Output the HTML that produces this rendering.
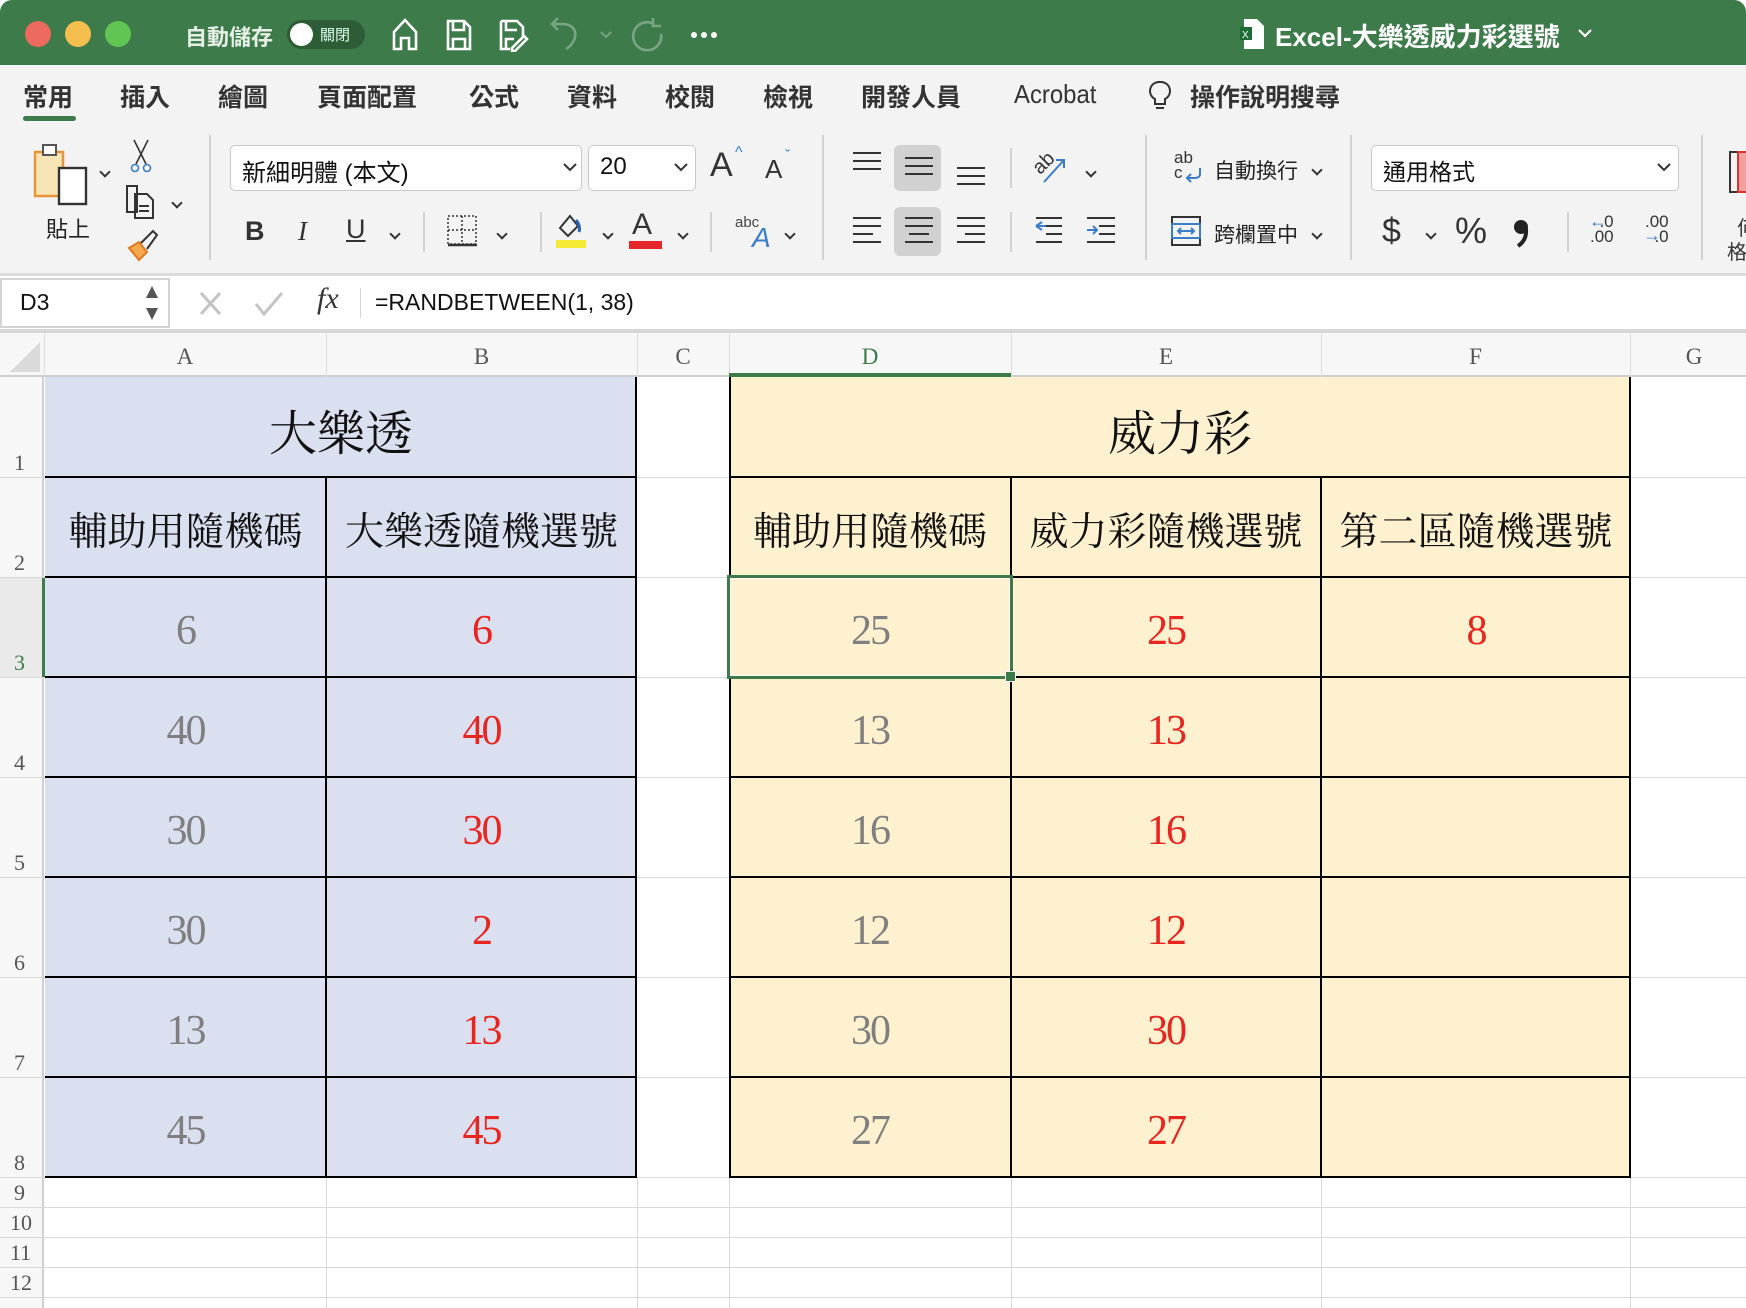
<!DOCTYPE html>
<html><head><meta charset="utf-8"><style>
*{margin:0;padding:0;box-sizing:border-box}
body{width:1746px;height:1308px;overflow:hidden;background:#fff;position:relative;font-family:"Liberation Sans","Noto Sans CJK TC",sans-serif;color:#222}
.a{position:absolute}
.t{position:absolute;white-space:nowrap}
.ser{font-family:"Liberation Serif","Noto Serif CJK SC",serif}
.c{position:absolute;display:flex;align-items:center;justify-content:center;font-family:"Liberation Serif","Noto Serif CJK SC",serif;padding-top:8px}
.g{color:#7f7f7f;font-size:42px;letter-spacing:-2px}
.r{color:#e8251f;font-size:42px;letter-spacing:-2px}
.h{font-size:39px;color:#111}
.sep{position:absolute;width:2px;background:#d2d2d2}
.chev{position:absolute;width:8px;height:8px;border-right:2.5px solid #333;border-bottom:2.5px solid #333;transform:translate(2px,8px) rotate(45deg)}
</style></head><body>
<!-- title bar -->
<div class="a" style="left:0;top:0;width:1746px;height:65px;background:#3d7b4a;border-radius:12px 12px 0 0"></div>
<div class="a" style="left:25px;top:21px;width:26px;height:26px;border-radius:50%;background:#ec6a5e"></div>
<div class="a" style="left:65px;top:21px;width:26px;height:26px;border-radius:50%;background:#f4bf4f"></div>
<div class="a" style="left:105px;top:21px;width:26px;height:26px;border-radius:50%;background:#61c554"></div>
<div class="t" style="left:185px;top:20px;font-size:22px;color:#e6efe6;font-weight:bold">自動儲存</div>
<div class="a" style="left:287px;top:20px;width:78px;height:29px;border-radius:15px;background:#2d5c37"></div>
<div class="a" style="left:290px;top:23px;width:23px;height:23px;border-radius:50%;background:#fff"></div>
<div class="t" style="left:320px;top:24px;font-size:15px;color:#dfe"> 關閉</div>
<svg class="a" style="left:390px;top:16px" width="340" height="36" viewBox="0 0 340 36" fill="none" stroke="#fff" stroke-width="2.6">
<path d="M4 33V16L15 4 26 16V33H19V22H11V33Z"/>
<path d="M58 5H74L80 11V33H58Z M63 5V14H74V5 M63 33V23H75V33"/>
<path d="M111 5H127L133 11V20 M111 5V33H120 M116 5V14H127 M116 33V23H124 M122 32L134 20L137 23L125 35H122Z"/>
<path stroke="#7aa585" d="M176 33C188 26 190 8 172 8H162 M168 2L162 8L168 14"/>
<path stroke="#7aa585" stroke-width="2" d="M211 16L216 21L221 16"/>
<path stroke="#7aa585" d="M264 8A14 14 0 1 0 271 18 M263 2V10H271"/>
</svg>
<div class="a" style="left:691px;top:32px;width:6px;height:6px;border-radius:50%;background:#fff"></div>
<div class="a" style="left:701px;top:32px;width:6px;height:6px;border-radius:50%;background:#fff"></div>
<div class="a" style="left:711px;top:32px;width:6px;height:6px;border-radius:50%;background:#fff"></div>
<svg class="a" style="left:1240px;top:18px" width="26" height="32"><path d="M4 1H17L24 8V31H4Z" fill="#fff"/><rect x="0" y="9" width="12" height="13" fill="#1e6b3a"/><text x="2" y="20" font-size="10" fill="#fff" font-family="Liberation Sans">X</text></svg>
<div class="t" style="left:1275px;top:17px;font-size:26px;color:#fff;font-weight:bold">Excel-大樂透威力彩選號</div>
<svg class="a" style="left:1577px;top:28px" width="16" height="12"><path d="M2 2L8 8L14 2" stroke="#fff" stroke-width="2.2" fill="none"/></svg>
<!-- tabs / ribbon -->
<div class="a" style="left:0;top:65px;width:1746px;height:210px;background:#f3f3f3"></div>
<div class="t" style="left:23px;top:78px;font-size:25px;font-weight:bold;color:#333">常用</div>
<div class="a" style="left:23px;top:116px;width:53px;height:5px;border-radius:3px;background:#3d7b4a"></div>
<div class="t" style="left:120px;top:78px;font-size:25px;color:#333;font-weight:bold">插入</div>
<div class="t" style="left:218px;top:78px;font-size:25px;color:#333;font-weight:bold">繪圖</div>
<div class="t" style="left:317px;top:78px;font-size:25px;color:#333;font-weight:bold">頁面配置</div>
<div class="t" style="left:469px;top:78px;font-size:25px;color:#333;font-weight:bold">公式</div>
<div class="t" style="left:567px;top:78px;font-size:25px;color:#333;font-weight:bold">資料</div>
<div class="t" style="left:665px;top:78px;font-size:25px;color:#333;font-weight:bold">校閱</div>
<div class="t" style="left:763px;top:78px;font-size:25px;color:#333;font-weight:bold">檢視</div>
<div class="t" style="left:861px;top:78px;font-size:25px;color:#333;font-weight:bold">開發人員</div>
<div class="t" style="left:1014px;top:79px;font-size:26px;color:#333;transform:scaleX(0.92);transform-origin:left">Acrobat</div>
<svg class="a" style="left:1148px;top:80px" width="24" height="32" fill="none" stroke="#333" stroke-width="2"><path d="M12 2A9 9 0 0 0 7 19V24H17V19A9 9 0 0 0 12 2Z M8 28H16"/></svg>
<div class="t" style="left:1190px;top:78px;font-size:25px;color:#333;font-weight:bold">操作說明搜尋</div>
<!-- paste -->
<svg class="a" style="left:32px;top:142px" width="60" height="70" fill="none"><rect x="3" y="10" width="28" height="44" fill="#f8e4b4" stroke="#e8953a" stroke-width="2.5"/><rect x="11" y="3" width="13" height="10" fill="#fff" stroke="#555" stroke-width="2"/><rect x="27" y="26" width="27" height="36" fill="#fff" stroke="#333" stroke-width="2.4"/></svg>
<div class="chev" style="left:99px;top:160px"></div>
<div class="t" style="left:46px;top:212px;font-size:22px;color:#222">貼上</div>
<svg class="a" style="left:128px;top:138px" width="30" height="36" fill="none" stroke="#333" stroke-width="1.6"><path d="M6 2L18 26 M20 2L8 26"/><circle cx="7" cy="30" r="3.5" stroke="#3a7dc9"/><circle cx="19" cy="30" r="3.5" stroke="#3a7dc9"/></svg>
<svg class="a" style="left:125px;top:184px" width="30" height="36" fill="none" stroke="#333" stroke-width="2"><path d="M2 2H12V28H2Z M10 10H22L28 16V34H10Z M14 22H24 M14 27H24"/></svg>
<div class="chev" style="left:171px;top:191px"></div>
<svg class="a" style="left:125px;top:228px" width="34" height="34"><path d="M4 20L14 14L22 24L14 32Z" fill="#f6a84c" stroke="#e07a22" stroke-width="2"/><path d="M16 15L28 3L32 7L22 21" fill="none" stroke="#333" stroke-width="2"/></svg>
<div class="sep" style="left:209px;top:135px;height:125px"></div>
<!-- font -->
<div class="a" style="left:230px;top:145px;width:352px;height:46px;background:#fff;border:1.5px solid #c8c8c8;border-radius:5px"></div>
<div class="t" style="left:242px;top:153px;font-size:24px;color:#111">新細明體 (本文)</div>
<svg class="a" style="left:562px;top:162px" width="16" height="12"><path d="M2 2L8 8L14 2" stroke="#333" stroke-width="2" fill="none"/></svg>
<div class="a" style="left:588px;top:145px;width:108px;height:46px;background:#fff;border:1.5px solid #c8c8c8;border-radius:5px"></div>
<div class="t" style="left:600px;top:153px;font-size:24px;color:#111">20</div>
<svg class="a" style="left:673px;top:162px" width="16" height="12"><path d="M2 2L8 8L14 2" stroke="#333" stroke-width="2" fill="none"/></svg>
<div class="t" style="left:710px;top:146px;font-size:34px;color:#333">A</div><div class="t" style="left:735px;top:144px;font-size:16px;color:#3a7dc9">^</div>
<div class="t" style="left:765px;top:154px;font-size:26px;color:#333">A</div><div class="t" style="left:785px;top:148px;font-size:16px;color:#3a7dc9">ˇ</div>
<div class="t" style="left:245px;top:216px;font-size:27px;font-weight:bold;color:#333">B</div>
<div class="t ser" style="left:298px;top:216px;font-size:27px;font-style:italic;color:#333">I</div>
<div class="t" style="left:346px;top:214px;font-size:27px;text-decoration:underline;color:#333">U</div>
<div class="chev" style="left:389px;top:222px"></div>
<div class="sep" style="left:423px;top:212px;height:40px"></div>
<svg class="a" style="left:446px;top:214px" width="34" height="34" fill="none" stroke="#333" stroke-width="1.5" stroke-dasharray="2 2"><rect x="2" y="2" width="28" height="28"/><path d="M16 2V30 M2 16H30"/><path d="M2 31H31" stroke-dasharray="none" stroke-width="2.5"/></svg>
<div class="chev" style="left:496px;top:222px"></div>
<div class="sep" style="left:540px;top:212px;height:40px"></div>
<svg class="a" style="left:554px;top:210px" width="34" height="40"><path d="M6 18L16 6L24 16L14 26Z" fill="none" stroke="#333" stroke-width="2"/><path d="M22 10Q27 16 25 22" stroke="#2a64b8" stroke-width="3" fill="none"/><rect x="2" y="30" width="30" height="8" fill="#f5ea35"/></svg>
<div class="chev" style="left:602px;top:222px"></div>
<div class="t" style="left:632px;top:208px;font-size:30px;color:#333">A</div>
<div class="a" style="left:629px;top:241px;width:33px;height:8px;background:#e5262a"></div>
<div class="chev" style="left:677px;top:222px"></div>
<div class="sep" style="left:710px;top:212px;height:40px"></div>
<div class="t" style="left:735px;top:214px;font-size:15px;color:#444">abc</div>
<div class="t" style="left:752px;top:222px;font-size:28px;font-style:italic;color:#3a7dc9">A</div>
<div class="chev" style="left:784px;top:222px"></div>
<div class="sep" style="left:822px;top:135px;height:125px"></div>
<!-- alignment -->
<div class="a" style="left:894px;top:145px;width:47px;height:46px;background:#d1d1d1;border-radius:6px"></div>
<div class="a" style="left:894px;top:207px;width:47px;height:49px;background:#d1d1d1;border-radius:6px"></div>
<svg class="a" style="left:850px;top:150px" width="260" height="100" fill="none" stroke="#333" stroke-width="2">
<path d="M3 3H31 M3 11H31 M3 19H31"/>
<path d="M55 8H83 M55 16H83 M55 24H83"/>
<path d="M107 18H135 M107 26H135 M107 34H135"/>
<path d="M3 68H31 M3 76H31 M3 84H23 M3 92H31"/>
<path d="M55 68H83 M55 76H83 M59 84H79 M55 92H83"/>
<path d="M107 68H135 M107 76H135 M115 84H135 M107 92H135"/>
<path d="M186 68H212 M196 76H212 M196 84H212 M186 92H212"/>
<path d="M186 76L192 72 M186 76L192 80 M186 76H196" stroke="#3a7dc9"/>
</svg>
<svg class="a" style="left:1085px;top:216px" width="36" height="34" fill="none" stroke="#333" stroke-width="2"><path d="M2 2H30 M14 10H30 M14 18H30 M2 26H30"/><path d="M2 14H12 M8 10L12 14L8 18" stroke="#3a7dc9"/></svg>
<div class="t" style="left:1033px;top:152px;font-size:20px;color:#333;transform:rotate(-45deg)">ab</div>
<svg class="a" style="left:1040px;top:156px" width="30" height="30"><path d="M4 26L24 4 M16 4H24V12" stroke="#3a7dc9" stroke-width="2" fill="none"/></svg>
<div class="chev" style="left:1085px;top:160px"></div>
<div class="sep" style="left:1010px;top:212px;height:40px"></div>
<div class="sep" style="left:1010px;top:148px;height:40px"></div>
<div class="sep" style="left:1145px;top:135px;height:125px"></div>
<div class="t" style="left:1174px;top:150px;font-size:17px;color:#333;line-height:15px">ab<br>c</div>
<svg class="a" style="left:1184px;top:166px" width="20" height="18"><path d="M16 2V8Q16 12 10 12H3 M7 8L3 12L7 16" stroke="#3a7dc9" stroke-width="2" fill="none"/></svg>
<div class="t" style="left:1214px;top:155px;font-size:21px;color:#222">自動換行</div>
<div class="chev" style="left:1311px;top:158px"></div>
<svg class="a" style="left:1170px;top:215px" width="32" height="32" fill="none" stroke="#333" stroke-width="2"><rect x="2" y="2" width="28" height="28"/><rect x="2" y="9" width="28" height="14" stroke="#3a7dc9"/><path d="M8 16H24 M11 13L8 16L11 19 M21 13L24 16L21 19" stroke="#3a7dc9"/></svg>
<div class="t" style="left:1214px;top:219px;font-size:21px;color:#222">跨欄置中</div>
<div class="chev" style="left:1311px;top:222px"></div>
<div class="sep" style="left:1350px;top:135px;height:125px"></div>
<!-- number -->
<div class="a" style="left:1371px;top:145px;width:308px;height:46px;background:#fff;border:1.5px solid #c8c8c8;border-radius:5px"></div>
<div class="t" style="left:1383px;top:153px;font-size:23px;color:#111">通用格式</div>
<svg class="a" style="left:1656px;top:162px" width="16" height="12"><path d="M2 2L8 8L14 2" stroke="#333" stroke-width="2" fill="none"/></svg>
<div class="t" style="left:1382px;top:212px;font-size:34px;color:#333;font-weight:300">$</div>
<div class="chev" style="left:1425px;top:222px"></div>
<div class="t" style="left:1455px;top:210px;font-size:36px;color:#333">%</div>
<svg class="a" style="left:1512px;top:218px" width="20" height="30"><circle cx="9" cy="9" r="7" fill="#222"/><path d="M14 11Q15 22 6 28" stroke="#222" stroke-width="4" fill="none"/></svg>
<div class="sep" style="left:1567px;top:212px;height:40px"></div>
<div class="t" style="left:1590px;top:214px;font-size:17px;color:#333;line-height:15px">&nbsp;&nbsp;.0<br>.00</div>
<div class="t" style="left:1589px;top:211px;font-size:18px;color:#3a7dc9">←</div>
<div class="t" style="left:1645px;top:214px;font-size:17px;color:#333;line-height:15px">.00<br>&nbsp;&nbsp;.0</div>
<div class="t" style="left:1643px;top:225px;font-size:18px;color:#3a7dc9">→</div>
<div class="sep" style="left:1701px;top:135px;height:125px"></div>
<svg class="a" style="left:1728px;top:150px" width="20" height="44" fill="none" stroke="#333" stroke-width="2"><rect x="2" y="2" width="30" height="40"/><rect x="10" y="2" width="10" height="40" fill="#f3a0a0" stroke="#d33"/></svg>
<div class="t" style="left:1737px;top:212px;font-size:20px;color:#333">何</div>
<div class="t" style="left:1727px;top:236px;font-size:20px;color:#333">格</div>
<div class="a" style="left:0;top:273px;width:1746px;height:3px;background:#dcdcdc"></div>
<!-- formula bar -->
<div class="a" style="left:0;top:276px;width:1746px;height:55px;background:#fff"></div>
<div class="a" style="left:0;top:278px;width:170px;height:50px;border:2px solid #d5d5d5;background:#fff"></div>
<div class="t" style="left:20px;top:289px;font-size:23px;color:#111">D3</div>
<svg class="a" style="left:144px;top:284px" width="16" height="38"><path d="M2 14L8 2L14 14Z M2 24L8 36L14 24Z" fill="#555"/></svg>
<svg class="a" style="left:198px;top:290px" width="90" height="28" fill="none" stroke="#c4c4c4" stroke-width="3"><path d="M3 3L22 24 M22 3L3 24"/><path d="M58 14L66 24L84 3"/></svg>
<div class="t ser" style="left:317px;top:282px;font-size:30px;font-style:italic;color:#333">fx</div>
<div class="a" style="left:360px;top:288px;width:1px;height:30px;background:#d5d5d5"></div>
<div class="t" style="left:375px;top:289px;font-size:23px;color:#111">=RANDBETWEEN(1, 38)</div>
<div class="a" style="left:0;top:329px;width:1746px;height:4px;background:#d8d8d8"></div>
<!-- column header -->
<div class="a" style="left:0;top:333px;width:1746px;height:44px;background:#f7f7f7;border-bottom:2px solid #cfcfcf"></div>
<svg class="a" style="left:8px;top:340px" width="34" height="34"><path d="M32 2V32H2Z" fill="#dadada"/></svg>
<div class="a" style="left:44px;top:333px;width:1px;height:44px;background:#ddd"></div>
<div class="a" style="left:326px;top:333px;width:1px;height:44px;background:#ddd"></div>
<div class="a" style="left:637px;top:333px;width:1px;height:44px;background:#ddd"></div>
<div class="a" style="left:729px;top:333px;width:1px;height:44px;background:#ddd"></div>
<div class="a" style="left:1011px;top:333px;width:1px;height:44px;background:#ddd"></div>
<div class="a" style="left:1321px;top:333px;width:1px;height:44px;background:#ddd"></div>
<div class="a" style="left:1630px;top:333px;width:1px;height:44px;background:#ddd"></div>
<div class="a" style="left:729px;top:373px;width:282px;height:4px;background:#3d7b4a"></div>
<div class="c" style="left:44px;top:335px;width:282px;height:44px;font-size:23px;color:#555;padding:0">A</div>
<div class="c" style="left:326px;top:335px;width:311px;height:44px;font-size:23px;color:#555;padding:0">B</div>
<div class="c" style="left:637px;top:335px;width:92px;height:44px;font-size:23px;color:#555;padding:0">C</div>
<div class="c" style="left:729px;top:335px;width:282px;height:44px;font-size:23px;color:#3d7b4a;padding:0">D</div>
<div class="c" style="left:1011px;top:335px;width:310px;height:44px;font-size:23px;color:#555;padding:0">E</div>
<div class="c" style="left:1321px;top:335px;width:309px;height:44px;font-size:23px;color:#555;padding:0">F</div>
<div class="c" style="left:1636px;top:335px;width:116px;height:44px;font-size:23px;color:#555;padding:0">G</div>
<!-- row header -->
<div class="a" style="left:0;top:377px;width:44px;height:931px;background:#f7f7f7;border-right:2px solid #cfcfcf"></div>
<div class="a" style="left:0;top:577px;width:44px;height:100px;background:#eaeaea"></div>
<div class="a" style="left:42px;top:577px;width:3px;height:100px;background:#3d7b4a"></div>
<!-- gridlines -->
<div class="a" style="left:44px;top:477px;width:1702px;height:1px;background:#d8d8d8"></div>
<div class="a" style="left:44px;top:577px;width:1702px;height:1px;background:#d8d8d8"></div>
<div class="a" style="left:44px;top:677px;width:1702px;height:1px;background:#d8d8d8"></div>
<div class="a" style="left:44px;top:777px;width:1702px;height:1px;background:#d8d8d8"></div>
<div class="a" style="left:44px;top:877px;width:1702px;height:1px;background:#d8d8d8"></div>
<div class="a" style="left:44px;top:977px;width:1702px;height:1px;background:#d8d8d8"></div>
<div class="a" style="left:44px;top:1077px;width:1702px;height:1px;background:#d8d8d8"></div>
<div class="a" style="left:0;top:1177px;width:1746px;height:1px;background:#d8d8d8"></div>
<div class="a" style="left:0;top:1207px;width:1746px;height:1px;background:#d8d8d8"></div>
<div class="a" style="left:0;top:1237px;width:1746px;height:1px;background:#d8d8d8"></div>
<div class="a" style="left:0;top:1267px;width:1746px;height:1px;background:#d8d8d8"></div>
<div class="a" style="left:0;top:1297px;width:1746px;height:1px;background:#d8d8d8"></div>
<div class="a" style="left:0;top:477px;width:44px;height:1px;background:#d8d8d8"></div>
<div class="a" style="left:0;top:577px;width:44px;height:1px;background:#d8d8d8"></div>
<div class="a" style="left:0;top:677px;width:44px;height:1px;background:#d8d8d8"></div>
<div class="a" style="left:0;top:777px;width:44px;height:1px;background:#d8d8d8"></div>
<div class="a" style="left:0;top:877px;width:44px;height:1px;background:#d8d8d8"></div>
<div class="a" style="left:0;top:977px;width:44px;height:1px;background:#d8d8d8"></div>
<div class="a" style="left:0;top:1077px;width:44px;height:1px;background:#d8d8d8"></div>
<div class="a" style="left:326px;top:1177px;width:1px;height:131px;background:#d8d8d8"></div>
<div class="a" style="left:637px;top:1177px;width:1px;height:131px;background:#d8d8d8"></div>
<div class="a" style="left:729px;top:1177px;width:1px;height:131px;background:#d8d8d8"></div>
<div class="a" style="left:1011px;top:1177px;width:1px;height:131px;background:#d8d8d8"></div>
<div class="a" style="left:1321px;top:1177px;width:1px;height:131px;background:#d8d8d8"></div>
<div class="a" style="left:1630px;top:1177px;width:1px;height:131px;background:#d8d8d8"></div>
<!-- row numbers -->
<div class="t ser" style="left:14px;top:450px;font-size:22px;color:#555">1</div>
<div class="t ser" style="left:14px;top:550px;font-size:22px;color:#555">2</div>
<div class="t ser" style="left:14px;top:650px;font-size:22px;color:#3d7b4a">3</div>
<div class="t ser" style="left:14px;top:750px;font-size:22px;color:#555">4</div>
<div class="t ser" style="left:14px;top:850px;font-size:22px;color:#555">5</div>
<div class="t ser" style="left:14px;top:950px;font-size:22px;color:#555">6</div>
<div class="t ser" style="left:14px;top:1050px;font-size:22px;color:#555">7</div>
<div class="t ser" style="left:14px;top:1150px;font-size:22px;color:#555">8</div>
<div class="t ser" style="left:14px;top:1180px;font-size:22px;color:#555">9</div>
<div class="t ser" style="left:10px;top:1210px;font-size:22px;color:#555">10</div>
<div class="t ser" style="left:10px;top:1240px;font-size:22px;color:#555">11</div>
<div class="t ser" style="left:10px;top:1270px;font-size:22px;color:#555">12</div>
<!-- blue table -->
<div class="a" style="left:45px;top:377px;width:592px;height:801px;background:#dbe0f1;border-right:2px solid #000;border-bottom:2px solid #000"></div>
<div class="a" style="left:45px;top:476px;width:592px;height:2px;background:#000"></div>
<div class="a" style="left:45px;top:576px;width:592px;height:2px;background:#000"></div>
<div class="a" style="left:45px;top:676px;width:592px;height:2px;background:#000"></div>
<div class="a" style="left:45px;top:776px;width:592px;height:2px;background:#000"></div>
<div class="a" style="left:45px;top:876px;width:592px;height:2px;background:#000"></div>
<div class="a" style="left:45px;top:976px;width:592px;height:2px;background:#000"></div>
<div class="a" style="left:45px;top:1076px;width:592px;height:2px;background:#000"></div>
<div class="a" style="left:325px;top:477px;width:2px;height:700px;background:#000"></div>
<!-- yellow table -->
<div class="a" style="left:729px;top:377px;width:902px;height:801px;background:#fdf1d0;border-left:2px solid #000;border-right:2px solid #000;border-bottom:2px solid #000"></div>
<div class="a" style="left:729px;top:476px;width:902px;height:2px;background:#000"></div>
<div class="a" style="left:729px;top:576px;width:902px;height:2px;background:#000"></div>
<div class="a" style="left:729px;top:676px;width:902px;height:2px;background:#000"></div>
<div class="a" style="left:729px;top:776px;width:902px;height:2px;background:#000"></div>
<div class="a" style="left:729px;top:876px;width:902px;height:2px;background:#000"></div>
<div class="a" style="left:729px;top:976px;width:902px;height:2px;background:#000"></div>
<div class="a" style="left:729px;top:1076px;width:902px;height:2px;background:#000"></div>
<div class="a" style="left:1010px;top:477px;width:2px;height:700px;background:#000"></div>
<div class="a" style="left:1320px;top:477px;width:2px;height:700px;background:#000"></div>
<!-- selection -->
<div class="a" style="left:727px;top:575px;width:286px;height:104px;border:3px solid #3d7b4a"></div>
<div class="a" style="left:730px;top:578px;width:280px;height:98px;border:1.5px solid #fff"></div>
<div class="a" style="left:1005px;top:671px;width:11px;height:11px;background:#3d7b4a;border:1px solid #fff"></div>
<!-- texts -->
<div class="c" style="left:45px;top:377px;width:592px;height:100px;font-size:48px;color:#111;padding-top:4px">大樂透</div>
<div class="c" style="left:729px;top:377px;width:902px;height:100px;font-size:48px;color:#111;padding-top:4px">威力彩</div>
<div class="c h" style="left:45px;top:477px;width:281px;height:100px;padding-top:4px">輔助用隨機碼</div>
<div class="c h" style="left:326px;top:477px;width:311px;height:100px;padding-top:4px">大樂透隨機選號</div>
<div class="c h" style="left:729px;top:477px;width:282px;height:100px;padding-top:4px">輔助用隨機碼</div>
<div class="c h" style="left:1011px;top:477px;width:310px;height:100px;padding-top:4px">威力彩隨機選號</div>
<div class="c h" style="left:1321px;top:477px;width:310px;height:100px;padding-top:4px">第二區隨機選號</div>

<div class="c g" style="left:45px;top:577px;width:281px;height:100px">6</div>
<div class="c r" style="left:326px;top:577px;width:311px;height:100px">6</div>
<div class="c g" style="left:729px;top:577px;width:282px;height:100px">25</div>
<div class="c r" style="left:1011px;top:577px;width:310px;height:100px">25</div>
<div class="c r" style="left:1321px;top:577px;width:310px;height:100px">8</div>

<div class="c g" style="left:45px;top:677px;width:281px;height:100px">40</div>
<div class="c r" style="left:326px;top:677px;width:311px;height:100px">40</div>
<div class="c g" style="left:729px;top:677px;width:282px;height:100px">13</div>
<div class="c r" style="left:1011px;top:677px;width:310px;height:100px">13</div>

<div class="c g" style="left:45px;top:777px;width:281px;height:100px">30</div>
<div class="c r" style="left:326px;top:777px;width:311px;height:100px">30</div>
<div class="c g" style="left:729px;top:777px;width:282px;height:100px">16</div>
<div class="c r" style="left:1011px;top:777px;width:310px;height:100px">16</div>

<div class="c g" style="left:45px;top:877px;width:281px;height:100px">30</div>
<div class="c r" style="left:326px;top:877px;width:311px;height:100px">2</div>
<div class="c g" style="left:729px;top:877px;width:282px;height:100px">12</div>
<div class="c r" style="left:1011px;top:877px;width:310px;height:100px">12</div>

<div class="c g" style="left:45px;top:977px;width:281px;height:100px">13</div>
<div class="c r" style="left:326px;top:977px;width:311px;height:100px">13</div>
<div class="c g" style="left:729px;top:977px;width:282px;height:100px">30</div>
<div class="c r" style="left:1011px;top:977px;width:310px;height:100px">30</div>

<div class="c g" style="left:45px;top:1077px;width:281px;height:100px">45</div>
<div class="c r" style="left:326px;top:1077px;width:311px;height:100px">45</div>
<div class="c g" style="left:729px;top:1077px;width:282px;height:100px">27</div>
<div class="c r" style="left:1011px;top:1077px;width:310px;height:100px">27</div>
</body></html>
